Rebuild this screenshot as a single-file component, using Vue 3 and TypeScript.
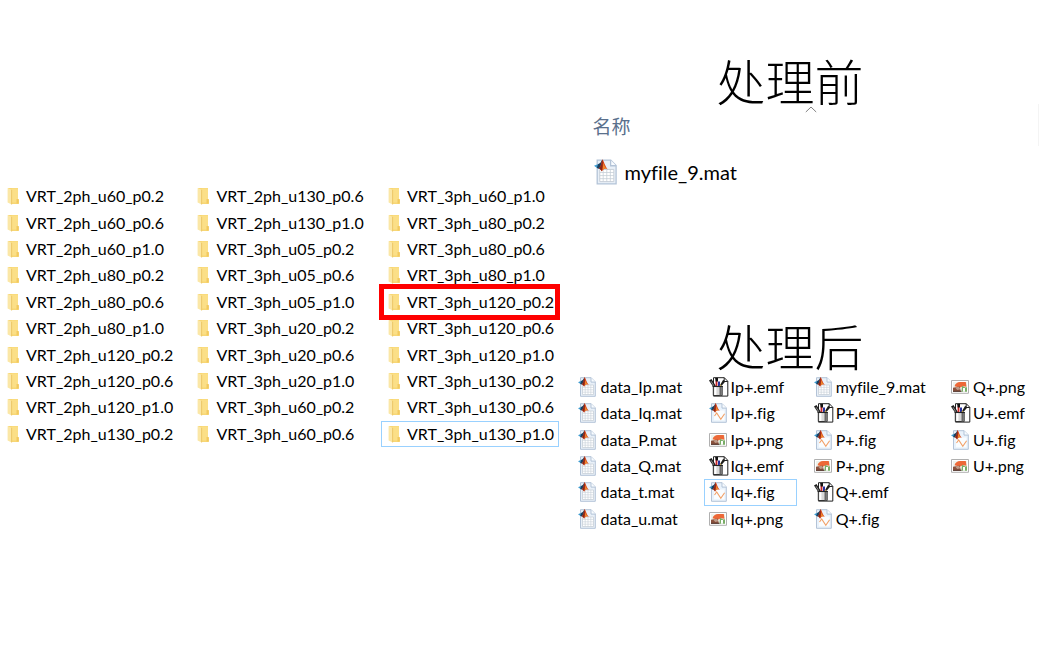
<script setup lang="ts">
import { ref } from 'vue'

type Kind = 'mat' | 'emf' | 'fig' | 'png'
interface FileItem { name: string; kind: Kind }

const levels = ['p0.2', 'p0.6', 'p1.0']
const groups = ['2ph_u60', '2ph_u80', '2ph_u120', '2ph_u130', '3ph_u05', '3ph_u20', '3ph_u60', '3ph_u80', '3ph_u120', '3ph_u130']
const folders: string[] = groups.flatMap(g => levels.map(l => `VRT_${g}_${l}`))

const highlighted = 'VRT_3ph_u120_p0.2'
const focusedFolder = ref('VRT_3ph_u130_p1.0')
const focusedFile = ref('Iq+.fig')

const names = [
  'data_Ip.mat', 'data_Iq.mat', 'data_P.mat', 'data_Q.mat', 'data_t.mat', 'data_u.mat',
  'Ip+.emf', 'Ip+.fig', 'Ip+.png', 'Iq+.emf', 'Iq+.fig', 'Iq+.png',
  'myfile_9.mat', 'P+.emf', 'P+.fig', 'P+.png', 'Q+.emf', 'Q+.fig',
  'Q+.png', 'U+.emf', 'U+.fig', 'U+.png',
]
const files: FileItem[] = names.map(name => ({ name, kind: name.split('.')[1] as Kind }))
</script>

<template>
  <svg class="sprite" aria-hidden="true">
    <symbol id="folder" viewBox="0 0 12 18">
      <path d="M1 1h10v11.500h.8V17H4z" fill="#f8d775" />
      <path d="M5 1.500h6v14H5z" fill="#fbdf87" />
      <path d="M.6 1L4.600 2.800V17.600L.6 15.500z" fill="#fbe7a6" />
      <path d="M4.600 3v14.500" stroke="#e8bd58" stroke-width=".7" />
      <path d="M9.500 12h2.200v4.500H9.500z" fill="#f2c95f" />
    </symbol>
    <symbol id="logo" viewBox="0 0 11 10">
      <path d="M0 5.200L3.400 3.800 5.500 5.500 3.200 7.500z" fill="#3d9bd0" />
      <path d="M3.200 4L5 2.800 6.500.3 5.800 6 3.500 7.500 2.200 6.700z" fill="#1d405f" />
      <path d="M6.600 0C7.800 1.500 8.600 5.500 10.800 8 8.900 6.800 7.800 7 6.100 9.700 5.400 8.200 4.500 7.500 3.600 7.300 5.500 6.500 5.700 2 6.600 0z" fill="#d8441b" />
      <path d="M6.600.3C7 2.500 6.900 6.500 6 9.500 5.500 8 4.800 7.600 3.900 7.200 5.800 6.200 5.900 2 6.600.3z" fill="#872719" />
      <path d="M7.300 3C8 5 8.800 6.800 10.400 7.800 8.800 7 7.800 7.200 6.800 8.400z" fill="#f08a2c" />
    </symbol>
    <symbol id="mat" viewBox="0 0 18 20">
      <path d="M2.500.7h10.600l4.200 4.200v14.400H2.500z" fill="#e9f0f8" stroke="#b3c3d7" />
      <path d="M13 .7v4.400h4.300" fill="#f9fcff" stroke="#b3c3d7" />
      <path d="M4.500 8h11v9.500h-11z" fill="#fff" stroke="#c3cbd4" stroke-width=".7" />
      <path d="M4.500 10.400h11M4.500 12.800h11M4.500 15.200h11M7.200 8v9.500M10 8v9.500M12.800 8v9.500" fill="none" stroke="#c6ced6" stroke-width=".6" />
      <use href="#logo" x="0" y="0" width="11" height="10" />
    </symbol>
    <symbol id="fig" viewBox="0 0 18 20">
      <path d="M2.500.7h10.600l4.200 4.200v14.400H2.500z" fill="#e9f2fb" stroke="#b3c3d7" />
      <path d="M13 .7v4.400h4.300" fill="#f9fcff" stroke="#b3c3d7" />
      <path d="M5 7.500h10.500v9.800H5z" fill="#fafdff" />
      <path d="M5.500 13l2.200-3 4.100 6.200 3.800-5.400" fill="none" stroke="#f2a066" stroke-width="1.100" />
      <use href="#logo" x="0" y="0" width="11" height="10" />
    </symbol>
    <symbol id="emf" viewBox="0 0 20 20">
      <path d="M4.500.7h10.800l3.500 3.600v14.800H4.500z" fill="#fff" stroke="#222" />
      <path d="M15.200.7v3.800h3.600" fill="none" stroke="#222" />
      <path d="M4.300 9.500h8.900v9H4.300z" fill="#d9d9d9" stroke="#333" />
      <path d="M5.400 10h2v8h-2z" fill="#fff" />
      <path d="M10.500 10h2.200v8.500h-2.200z" fill="#686868" />
      <path d="M0 3.500l2.500-1.500 4.500 7.200H3.800z" fill="#1c1c1c" />
      <path d="M2 4.200l2.800 4.600" stroke="#aaa" stroke-width=".8" />
      <path d="M6.600 3.200h1.800v6.300H6.600z" fill="#c92525" />
      <path d="M6.100 1L9 .8v3.600H6.700z" fill="#111" />
      <path d="M9 4.500h2v5H9z" fill="#25329f" />
      <path d="M14.300 3.500l1.200 1.200-4 4.800H10z" fill="#c2a544" />
      <path d="M14.200 2.800l2.100 1.800-3.700 4.200-1.200-1.300z" fill="#1c1c1c" />
      <path d="M3.500 9.500h10.400" stroke="#222" stroke-width="1.100" />
    </symbol>
    <symbol id="png" viewBox="0 0 18 14">
      <path d="M.5.500h17v12.800H.5z" fill="#fff" stroke="#b0b0b0" />
      <path d="M2 2h14v9.800H2z" fill="#eef3ec" />
      <path d="M3.500 6.200C4 3.500 6.500 2.200 9 2h5.800l.7 4.800-3.600-.6-3.100 1.500z" fill="#ed6938" />
      <path d="M2 7.800l6.600-1.400L10 11.800H2z" fill="#8a513d" />
      <path d="M4.200 7.500l3.500-.8 1.800 2.600-3.300.7z" fill="#bd9b88" />
      <path d="M11 5.800l3.200 1.700 1.800-.3v4.600h-5.500z" fill="#79ad67" />
      <path d="M12 8h2v3.800h-2z" fill="#fff" />
      <path d="M2 10.800h8.500v1H2z" fill="#523a32" />
    </symbol>
  </svg>

  <main class="page">
    <ul class="folders">
      <li v-for="name in folders" :key="name" :class="{ marked: name === highlighted }">
        <button type="button" class="item" :class="{ focused: name === focusedFolder }" @click="focusedFolder = name">
          <svg class="folder-icon" aria-hidden="true"><use href="#folder" /></svg>
          <span>{{ name }}</span>
        </button>
      </li>
    </ul>

    <div class="results">
      <section class="before">
        <h2>处理前</h2>
        <div class="column-head">
          <button type="button">名称</button>
          <svg class="sort" viewBox="0 0 12 7" aria-hidden="true"><path d="M.8 6L6 1l5.200 5" /></svg>
        </div>
        <button type="button" class="item large">
          <svg class="large-icon" aria-hidden="true"><use href="#mat" /></svg>
          <span>myfile_9.mat</span>
        </button>
      </section>

      <section class="after">
        <h2>处理后</h2>
        <ul class="files">
          <li v-for="file in files" :key="file.name">
            <button type="button" class="item" :class="{ focused: file.name === focusedFile }" @click="focusedFile = file.name">
              <svg class="file-icon" :class="file.kind" aria-hidden="true"><use :href="'#' + file.kind" /></svg>
              <span>{{ file.name }}</span>
            </button>
          </li>
        </ul>
      </section>
    </div>
  </main>
</template>

<style>
body {
  background: #fff;
}
</style>

<style scoped>
.sprite {
  position: absolute;
  width: 0;
  height: 0;
}
.page {
  display: grid;
  grid-template-columns: 55fr 45fr;
  align-items: start;
  min-height: 100vh;
  color: #000;
  font-family: Lato, "Open Sans", "Noto Sans CJK SC", sans-serif;
  font-size: 16px;
  font-variant-ligatures: none;
}
ul {
  margin: 0;
  padding: 0;
  list-style: none;
  display: grid;
  grid-auto-flow: column;
}
button {
  font: inherit;
  font-variant-ligatures: inherit;
  color: inherit;
  background: none;
  border: 1px solid transparent;
  padding: 0;
  margin: 0;
  text-align: left;
}
.folders {
  height: 264px;
  margin-top: 183px;
  grid-template-rows: repeat(10, 1fr);
  grid-template-columns: repeat(3, 1fr);
}
li {
  position: relative;
  min-height: 0;
}
.item {
  display: flex;
  align-items: center;
  width: calc(100% - 12px);
  height: 100%;
  white-space: nowrap;
  line-height: 20px;
}
.item.focused {
  border-color: #99d1ff;
}
.folders .item {
  padding-left: 6px;
  gap: 7px;
}
.folder-icon {
  width: 12px;
  height: 18px;
}
.marked::after {
  content: "";
  position: absolute;
  z-index: 1;
  inset: -5px 11px -5px -2px;
  border: 5px solid #fe0000;
  pointer-events: none;
}
h2 {
  margin: 0;
  padding-left: 31%;
  font-family: "Noto Sans CJK SC", sans-serif;
  font-size: 49px;
  font-weight: 300;
  line-height: 48px;
  color: #000;
}
.before {
  padding-top: 56px;
}
.column-head {
  position: relative;
  display: flex;
  align-items: center;
  height: 42px;
  padding-left: 20px;
  border-right: 1px solid #f4f4f4;
  color: #5a708c;
  font-size: 19px;
}
.sort {
  position: absolute;
  left: 50%;
  top: 2px;
  width: 12px;
  height: 7px;
  fill: none;
  stroke: #808080;
}
.item.large {
  height: 52px;
  padding-left: 22px;
  gap: 7px;
  font-size: 20px;
}
.large-icon {
  width: 23px;
  height: 26px;
}
.after {
  padding-top: 123px;
}
.files {
  height: 158px;
  margin-top: 5px;
  padding-left: 2px;
  grid-template-rows: repeat(6, 1fr);
  grid-template-columns: 130fr 105fr 137fr 93fr;
}
.files .item {
  padding-left: 4px;
  gap: 4px;
}
.file-icon {
  flex: none;
  width: 18px;
  height: 20px;
}
.file-icon.emf {
  width: 20px;
  margin-right: -2px;
}
.file-icon.png {
  height: 14px;
}
</style>
